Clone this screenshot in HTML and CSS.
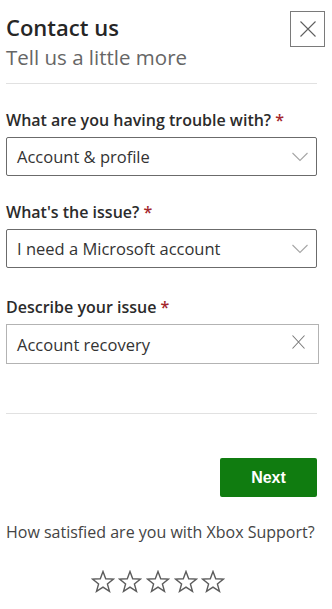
FILE: index.html
```html
<!DOCTYPE html>
<html>
  <head>
    <meta charset="utf-8">
    <meta name="viewport" content="width=device-width, initial-scale=1">
    <title>Contact us</title>
    <link rel="stylesheet" href="styles.css">
  </head>
  <body>
    <div class="panel">
      <header>
        <div class="titles">
          <h1>Contact us</h1>
          <p class="subtitle">Tell us a little more</p>
        </div>
        <a href="#" class="close" aria-label="Close">
          <svg width="16" height="16" viewBox="0 0 16 16"><path d="M0.5 0.5 L15.5 15.5 M15.5 0.5 L0.5 15.5" stroke="#5f5f5f" stroke-width="1.1" fill="none"/></svg>
        </a>
      </header>

      <form class="form">
        <div class="field">
          <label>What are you having trouble with? <span class="req">*</span></label>
          <div class="select">
            <span>Account &amp; profile</span>
            <svg width="16" height="10" viewBox="0 0 16 10"><path d="M0.5 1 L8 8.5 L15.5 1" stroke="#a6a6a6" stroke-width="1.1" fill="none"/></svg>
          </div>
        </div>

        <div class="field">
          <label>What's the issue? <span class="req">*</span></label>
          <div class="select">
            <span>I need a Microsoft account</span>
            <svg width="16" height="10" viewBox="0 0 16 10"><path d="M0.5 1 L8 8.5 L15.5 1" stroke="#a6a6a6" stroke-width="1.1" fill="none"/></svg>
          </div>
        </div>

        <div class="field last">
          <label>Describe your issue <span class="req">*</span></label>
          <div class="input">
            <span>Account recovery</span>
            <svg width="13" height="14" viewBox="0 0 13 14"><path d="M0.5 0.5 L12.5 13.5 M12.5 0.5 L0.5 13.5" stroke="#7a7a7a" stroke-width="1.1" fill="none"/></svg>
          </div>
        </div>
      </form>

      <div class="actions">
        <button class="next" type="button">Next</button>
      </div>

      <footer>
        <p>How satisfied are you with Xbox Support?</p>
        <div class="stars">
          <svg width="24" height="23" viewBox="-1 -1 24 23"><path d="M11 0.5 L13.7 7.8 L21.5 8.1 L15.4 12.9 L17.5 20.4 L11 16.1 L4.5 20.4 L6.6 12.9 L0.5 8.1 L8.3 7.8 Z" fill="none" stroke="#5c5c5c" stroke-width="1.4" stroke-linejoin="miter"/></svg>
          <svg width="24" height="23" viewBox="-1 -1 24 23"><path d="M11 0.5 L13.7 7.8 L21.5 8.1 L15.4 12.9 L17.5 20.4 L11 16.1 L4.5 20.4 L6.6 12.9 L0.5 8.1 L8.3 7.8 Z" fill="none" stroke="#5c5c5c" stroke-width="1.4" stroke-linejoin="miter"/></svg>
          <svg width="24" height="23" viewBox="-1 -1 24 23"><path d="M11 0.5 L13.7 7.8 L21.5 8.1 L15.4 12.9 L17.5 20.4 L11 16.1 L4.5 20.4 L6.6 12.9 L0.5 8.1 L8.3 7.8 Z" fill="none" stroke="#5c5c5c" stroke-width="1.4" stroke-linejoin="miter"/></svg>
          <svg width="24" height="23" viewBox="-1 -1 24 23"><path d="M11 0.5 L13.7 7.8 L21.5 8.1 L15.4 12.9 L17.5 20.4 L11 16.1 L4.5 20.4 L6.6 12.9 L0.5 8.1 L8.3 7.8 Z" fill="none" stroke="#5c5c5c" stroke-width="1.4" stroke-linejoin="miter"/></svg>
          <svg width="24" height="23" viewBox="-1 -1 24 23"><path d="M11 0.5 L13.7 7.8 L21.5 8.1 L15.4 12.9 L17.5 20.4 L11 16.1 L4.5 20.4 L6.6 12.9 L0.5 8.1 L8.3 7.8 Z" fill="none" stroke="#5c5c5c" stroke-width="1.4" stroke-linejoin="miter"/></svg>
        </div>
      </footer>
    </div>
  </body>
</html>
```

FILE: styles.css
```css
body, html {
    margin: 0;
    padding: 0;
    background: #fff;
    font-family: 'Open Sans', 'Noto Sans', sans-serif;
    color: #262626;
}

.panel {
    width: 311px;
    padding: 11px 0 0 6px;
}

header {
    display: flex;
    justify-content: space-between;
    align-items: flex-start;
    padding-bottom: 13px;
    border-bottom: 1px solid #e1e1e1;
}

h1 {
    margin: 2px 0 0;
    font-size: 22px;
    line-height: 28px;
    font-weight: 600;
    color: #262626;
}

.subtitle {
    margin: 3px 0 0;
    font-size: 20.5px;
    line-height: 26px;
    color: #666;
}

.close {
    display: flex;
    align-items: center;
    justify-content: center;
    width: 33px;
    height: 34px;
    margin-right: -8px;
    border: 1px solid #7a7a7a;
}

.form {
    padding-top: 26px;
    padding-bottom: 49px;
    border-bottom: 1px solid #e1e1e1;
}

.field + .field {
    margin-top: 26px;
}

.field.last {
    margin-top: 29px;
}

label {
    display: block;
    font-size: 16px;
    line-height: 21px;
    font-weight: 600;
    margin-bottom: 6px;
    color: #2b2b2b;
}

.req {
    color: #a4262c;
}

.select, .input {
    display: flex;
    justify-content: space-between;
    align-items: center;
    box-sizing: border-box;
    height: 39px;
    padding: 0 8px 0 10px;
    border: 1px solid #6b6b6b;
    border-radius: 2px;
    font-size: 16.5px;
    color: #333;
}

.input {
    height: 40px;
    margin-right: -2px;
    padding-right: 13px;
    border-color: #b3b3b3;
    border-radius: 0;
}

.input svg {
    margin-top: -4px;
}

.actions {
    display: flex;
    justify-content: flex-end;
    padding-top: 44px;
}

.next {
    width: 97px;
    height: 39px;
    border: 0;
    border-radius: 2px;
    background: #107c10;
    color: #fff;
    font-family: 'Liberation Sans', Arial, sans-serif;
    font-size: 16px;
    font-weight: 700;
}

footer {
    padding-top: 24px;
}

footer p {
    margin: 0;
    font-size: 16px;
    line-height: 22px;
    color: #444;
}

.stars {
    display: flex;
    justify-content: center;
    gap: 3.7px;
    padding-top: 27px;
    padding-right: 7px;
}
```
